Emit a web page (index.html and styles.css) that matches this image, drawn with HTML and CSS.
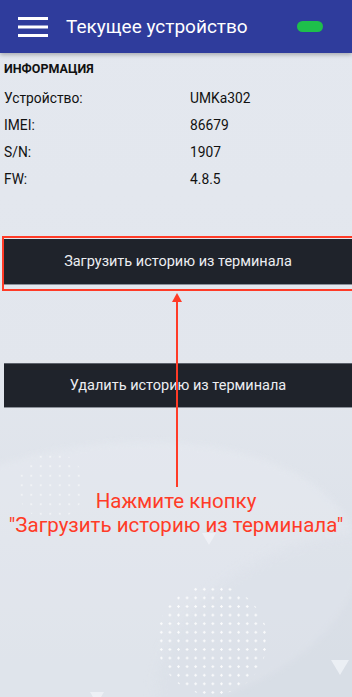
FILE: index.html
```html
<!DOCTYPE html>
<html lang="ru">
<head>
<meta charset="utf-8">
<title>Текущее устройство</title>
<link rel="stylesheet" href="styles.css">
</head>
<body>
<div class="screen">
  <div class="bg-shape shape-a"></div>
  <div class="bg-shape shape-b"></div>
  <div class="dots dots-left"></div>
  <div class="dots dots-bottom"></div>
  <div class="tri tri-1"></div>
  <div class="tri tri-2"></div>
  <div class="tri tri-3"></div>

  <header class="appbar">
    <svg class="menu" width="30" height="20" viewBox="0 0 30 20">
      <rect x="0" y="0" width="30" height="3" fill="#fff"/>
      <rect x="0" y="8.5" width="30" height="3" fill="#fff"/>
      <rect x="0" y="17" width="30" height="3" fill="#fff"/>
    </svg>
    <div class="title">Текущее устройство</div>
    <div class="status"></div>
  </header>

  <section class="info">
    <div class="info-head">ИНФОРМАЦИЯ</div>
    <div class="row"><span>Устройство:</span><span>UMKa302</span></div>
    <div class="row"><span>IMEI:</span><span>86679</span></div>
    <div class="row"><span>S/N:</span><span>1907</span></div>
    <div class="row"><span>FW:</span><span>4.8.5</span></div>
  </section>

  <div class="highlight">
    <button class="btn">Загрузить историю из терминала</button>
  </div>
  <button class="btn btn-second">Удалить историю из терминала</button>

  <svg class="arrow" width="12" height="194" viewBox="0 0 12 194">
    <polygon points="6,0 11,9 1,9" fill="#ff3b27"/>
    <rect x="5" y="8" width="2" height="186" fill="#ff3b27"/>
  </svg>
  <div class="hint">Нажмите кнопку<br>"Загрузить историю из терминала"</div>
</div>
</body>
</html>
```

FILE: styles.css
```css
* { box-sizing: border-box; }
html, body { margin: 0; padding: 0; }
body {
  font-family: Roboto, "Noto Sans", sans-serif;
  width: 352px;
  height: 697px;
  overflow: hidden;
}
.screen {
  position: relative;
  width: 352px;
  height: 697px;
  overflow: hidden;
  background: linear-gradient(180deg, #e4e8ef 0%, #e2e6ed 55%, #d8dee6 100%);
}
.bg-shape {
  position: absolute;
  border-radius: 50%;
}
.shape-a {
  left: -160px;
  top: 445px;
  width: 520px;
  height: 280px;
  background: rgba(236, 239, 244, 0.35);
  transform: rotate(-8deg);
  filter: blur(3px);
}
.shape-b {
  left: 150px;
  top: 540px;
  width: 360px;
  height: 240px;
  background: rgba(216, 222, 230, 0.35);
  transform: rotate(-20deg);
  filter: blur(6px);
}
.dots {
  position: absolute;
  background-image: radial-gradient(circle, rgba(255,255,255,0.85) 1px, transparent 1.4px);
}
.dots-left {
  left: 17px;
  top: 452px;
  width: 68px;
  height: 68px;
  background-size: 9.5px 9.5px;
  border-radius: 50%;
  opacity: 0.55;
}
.dots-bottom {
  left: 157px;
  top: 585px;
  width: 110px;
  height: 110px;
  background-size: 8.6px 8.6px;
  border-radius: 50%;
}
.tri {
  position: absolute;
  width: 0; height: 0;
  border-left: 7px solid transparent;
  border-right: 7px solid transparent;
  border-top: 12px solid rgba(240, 243, 247, 0.8);
}
.tri-1 { left: 202px; top: 533px; }
.tri-2 { left: 331px; top: 660px; border-left-width: 9px; border-right-width: 9px; border-top-width: 15px; }
.tri-3 { left: 90px; top: 692px; }

.appbar {
  position: relative;
  z-index: 2;
  height: 53px;
  background: #2f3c9c;
  display: flex;
  align-items: center;
  padding: 0 29px 0 18px;
  box-shadow: 0 2px 4px rgba(0,0,0,0.25);
}
.menu { flex: none; margin-right: 18px; }
.title {
  flex: 1;
  color: #fff;
  font-size: 19px;
}
.status {
  width: 26px;
  height: 11px;
  border-radius: 6px;
  background: #1ebf4b;
}

.info {
  position: relative;
  padding: 8px 4px 0 4px;
  color: #111;
}
.info-head {
  font-size: 12.5px;
  font-weight: bold;
  line-height: 16px;
  margin-bottom: 8px;
}
.row {
  display: grid;
  grid-template-columns: 186px 1fr;
  font-size: 13.8px;
  line-height: 27px;
}

.highlight {
  position: relative;
  margin: 43px 0 0 2px;
  border: 2px solid #ff3b27;
  border-right: none;
  padding: 1px 0 4px 0;
}
.btn {
  display: block;
  width: 100%;
  height: 46px;
  border: none;
  border-bottom: 1px solid #8b9099;
  background: #1f232b;
  color: #eceef2;
  font-family: Roboto, "Noto Sans", sans-serif;
  font-size: 14.5px;
  padding: 0;
  margin: 0;
}
.btn-second {
  position: relative;
  width: 348px;
  margin: 72px 0 0 4px;
  height: 45px;
  border-top: 1px solid #5c616b;
}

.arrow {
  position: absolute;
  left: 171px;
  top: 293px;
}
.hint {
  position: absolute;
  left: 0;
  right: 0;
  top: 489px;
  text-align: center;
  color: #ff3b27;
  font-size: 20.5px;
  line-height: 24px;
}
```
